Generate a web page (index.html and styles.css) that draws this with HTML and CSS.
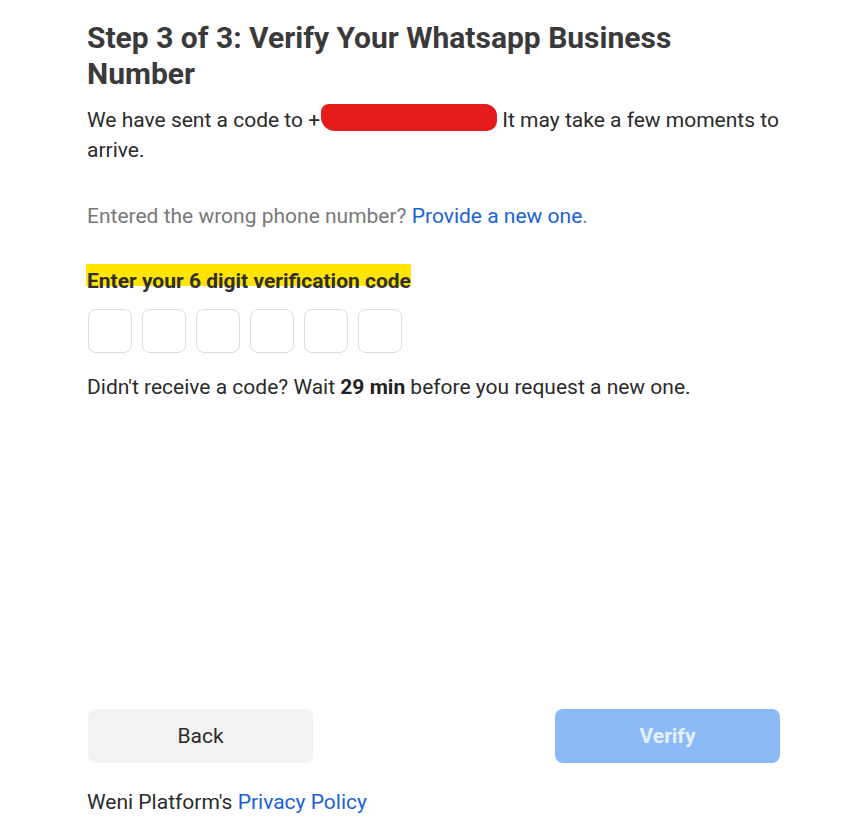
FILE: index.html
```html
<!DOCTYPE html>
<html>
<head>
<meta charset="utf-8">
<link rel="stylesheet" href="styles.css">
</head>
<body>
<div class="page">
  <main class="content">
    <h1 class="title">Step 3 of 3: Verify Your Whatsapp Business Number</h1>
    <p class="sent">We have sent a code to +<span class="redact"></span> It may take a few moments to arrive.</p>
    <p class="wrong">Entered the wrong phone number? <a class="link" href="#">Provide a new one</a>.</p>
    <label class="code-label"><span class="hl">Enter your 6 digit verification code</span></label>
    <div class="code-row">
      <input class="code-box" type="text" maxlength="1">
      <input class="code-box" type="text" maxlength="1">
      <input class="code-box" type="text" maxlength="1">
      <input class="code-box" type="text" maxlength="1">
      <input class="code-box" type="text" maxlength="1">
      <input class="code-box" type="text" maxlength="1">
    </div>
    <p class="wait">Didn't receive a code? Wait <strong>29 min</strong> before you request a new one.</p>
  </main>
  <footer class="footer">
    <div class="actions">
      <button class="btn btn-back">Back</button>
      <button class="btn btn-verify" disabled>Verify</button>
    </div>
    <p class="policy">Weni Platform's <a class="link" href="#">Privacy Policy</a></p>
  </footer>
</div>
</body>
</html>
```

FILE: styles.css
```css
* { box-sizing: border-box; }
html, body { margin: 0; padding: 0; background: #fff; }
body {
  font-family: Roboto, "Noto Sans", sans-serif;
  color: #3b3b3b;
}
.page {
  width: 693px;
  margin-left: 87px;
  height: 820px;
  display: flex;
  flex-direction: column;
  justify-content: space-between;
  padding-top: 20px;
  padding-bottom: 3px;
}
.title {
  margin: 0;
  font-size: 30px;
  line-height: 36px;
  font-weight: 700;
  color: #3a3a3a;
}
.sent {
  margin: 12px 0 0;
  font-size: 21px;
  line-height: 30px;
  color: #2b2b2b;
}
.redact {
  display: inline-block;
  background: #e51c1c;
  border-radius: 8px 12px 10px 14px;
  width: 176px;
  height: 27px;
  vertical-align: -4px;
  margin-left: 1px;
}
.wrong {
  margin: 36px 0 0;
  font-size: 21px;
  line-height: 30px;
  color: #787878;
}
.link { color: #1b62d6; text-decoration: none; }
.code-label {
  display: block;
  margin-top: 39px;
  font-size: 21px;
  font-weight: 700;
  line-height: 22px;
  color: #2f2f2f;
}
.hl {
  background: linear-gradient(#ffe500, #ffe500) no-repeat 0 0 / 100% 22px;
  padding: 5px 0 0 1px;
  margin-left: -1px;
}
.code-row {
  display: flex;
  gap: 10px;
  margin-top: 17px;
  padding-left: 1px;
}
.code-box {
  width: 44px;
  height: 44px;
  border: 1px solid #dcdcdc;
  border-radius: 8px;
  background: #fff;
  padding: 0;
  font: inherit;
}
.wait {
  margin: 19px 0 0;
  font-size: 21px;
  line-height: 30px;
  color: #2b2b2b;
}
.wait strong { font-weight: 700; color: #222; }
.actions {
  display: flex;
  justify-content: space-between;
  padding-left: 1px;
}
.btn {
  width: 225px;
  height: 54px;
  border: none;
  border-radius: 8px;
  font-family: Roboto, sans-serif;
  font-size: 21px;
}
.btn-back {
  background: #f2f2f2;
  color: #2b2b2b;
}
.btn-verify {
  background: #8cbaf7;
  color: #e6f0fd;
  font-weight: 700;
}
.policy {
  margin: 24px 0 0;
  font-size: 21px;
  line-height: 30px;
  color: #2b2b2b;
}
```
